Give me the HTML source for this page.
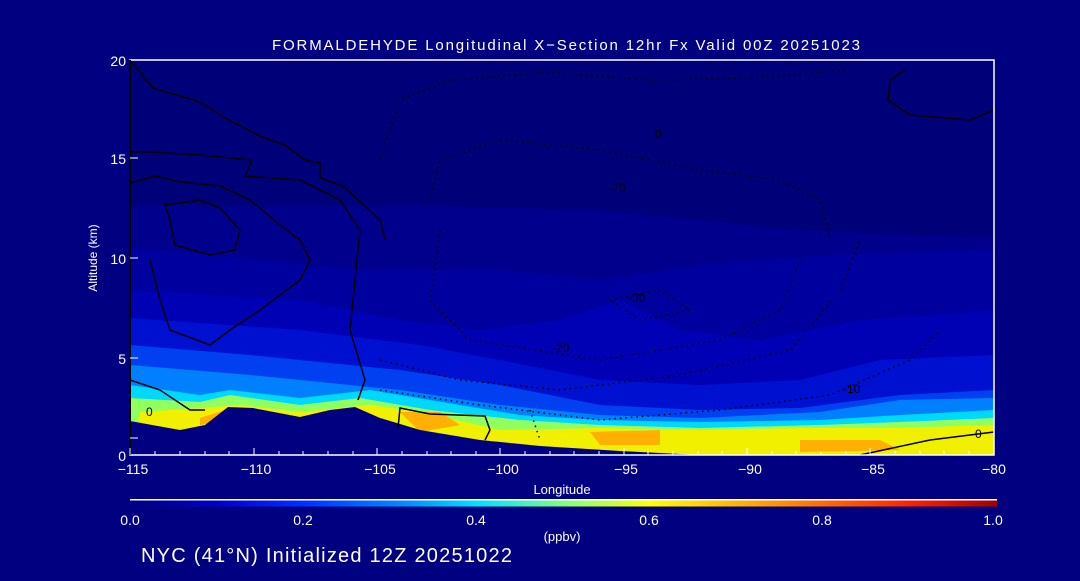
<!DOCTYPE html><html><head><style>
body{margin:0;background:#000080;width:1080px;height:576px;overflow:hidden;font-family:"Liberation Sans",sans-serif}
</style></head><body>
<svg width="1080" height="576" xmlns="http://www.w3.org/2000/svg" font-family="Liberation Sans, sans-serif" fill="#fff">
<defs>
<linearGradient id="cb" x1="0" x2="1">
<stop offset="0" stop-color="#000080"/><stop offset="0.1" stop-color="#0000c8"/><stop offset="0.2" stop-color="#0030ff"/><stop offset="0.32" stop-color="#0090ff"/><stop offset="0.4" stop-color="#00e0ff"/><stop offset="0.5" stop-color="#80ff80"/><stop offset="0.6" stop-color="#ffff00"/><stop offset="0.75" stop-color="#ff9000"/><stop offset="0.9" stop-color="#ff2000"/><stop offset="1" stop-color="#a00000"/>
</linearGradient>
<clipPath id="pc"><rect x="130" y="60" width="864" height="395"/></clipPath>
</defs>
<text x="272" y="50" font-size="15" textLength="588" lengthAdjust="spacing">FORMALDEHYDE Longitudinal X−Section 12hr  Fx Valid 00Z 20251023</text>
<g clip-path="url(#pc)">
<rect x="130" y="60" width="864" height="395" fill="#000078"/>
<path d="M130 205 L400 205 L600 210 L800 230 L994 238 L994 455 L130 455Z" fill="#00008c"/>
<path d="M130 248 L250 258 L350 270 L500 270 L600 280 L700 265 L830 255 L994 250 L994 455 L130 455Z" fill="#00009e"/>
<path d="M130 290 L300 300 L400 320 L480 330 L560 320 L620 300 L680 330 L760 340 L860 320 L994 310 L994 455 L130 455Z" fill="#0000b4"/>
<path d="M130 318 L300 330 L420 345 L500 360 L600 380 L700 385 L800 380 L880 360 L994 355 L994 455 L130 455Z" fill="#0010d0"/>
<path d="M130 345 L250 355 L400 370 L500 385 L600 405 L700 410 L800 408 L900 395 L994 390 L994 455 L130 455Z" fill="#0040f0"/>
<path d="M130 365 L250 375 L400 390 L500 405 L600 415 L700 418 L820 412 L900 400 L994 398 L994 455 L130 455Z" fill="#0080ff"/>
<path d="M130 385 L200 395 L230 390 L300 398 L370 390 L430 400 L520 415 L600 420 L700 422 L820 420 L900 415 L994 410 L994 455 L130 455Z" fill="#00d8ff"/>
<path d="M130 398 L200 402 L230 395 L300 405 L360 398 L430 410 L520 420 L600 425 L700 428 L820 425 L900 422 L994 418 L994 455 L130 455Z" fill="#90ff60"/>
<path d="M140 412 L200 408 L240 405 L300 412 L370 405 L420 412 L500 430 L600 428 L700 430 L800 428 L900 428 L994 425 L994 455 L130 455Z" fill="#f0f000"/>
<path d="M200 418 L225 410 L250 415 L200 425Z M400 412 L440 412 L460 425 L420 432Z M590 432 L660 430 L660 445 L600 445Z M800 440 L880 440 L900 450 L800 452Z" fill="#ffb000"/>
<path d="M130 421 L180 430 L205 425 L228 407 L253 408 L300 417 L330 410 L355 407 L380 418 L420 430 L480 440 L540 446 L620 451 L700 455 L994 455 L994 455 L130 455Z" fill="#000080"/>
<g fill="none" stroke="#000" stroke-width="1.5">
<path d="M130 60 L153 88 L200 102 L225 118 L260 136 L285 145 L305 160 L320 163 L320 178 L343 186 L380 220 L385 240"/>
<path d="M130 152 L150 152 L200 155 L252 160 L245 176 L300 180 L340 200 L360 230 L350 330 L365 380 L358 400"/>
<path d="M130 183 L155 176 L180 182 L220 186 L250 200 L280 225 L300 240 L310 260 L300 280 L260 310 L230 330 L210 345 L170 330 L160 300 L150 260"/>
<path d="M165 205 L200 200 L220 208 L240 230 L235 250 L210 255 L175 245 L170 220 Z"/>
<path d="M130 380 L160 390 L190 410 L205 410"/>
<path d="M398 428 L400 408 L430 414 L485 416 L490 430 L485 440"/>
<path d="M860 455 L930 440 L994 432"/>
<path d="M905 70 L890 80 L888 100 L910 115 L970 120 L994 110"/>
</g>
<g fill="none" stroke="#000" stroke-width="1.5" stroke-dasharray="1.5 4">
<path d="M380 160 L400 100 L450 80 L550 72 L650 80 L750 78 L850 70"/>
<path d="M430 200 L440 160 L500 140 L600 150 L700 170 L780 180 L820 200 L830 240"/>
<path d="M440 230 L430 300 L470 340 L600 360 L720 340 L780 310 L800 260"/>
<path d="M380 360 L460 380 L560 390 L680 375 L790 350 L840 290 L860 240"/>
<path d="M380 390 L480 405 L600 420 L720 410 L830 395 L910 360 L940 330"/>
<path d="M530 410 L540 440 M610 300 L660 290 L690 310 L640 320 Z"/>
</g>
</g>
<g font-size="12" fill="#000"><text x="655" y="138">0</text><text x="608" y="192">-20</text><text x="628" y="302">-30</text><text x="552" y="352">-20</text><text x="843" y="393">-10</text><text x="975" y="438">0</text><text x="146" y="416">0</text></g>
<g stroke="#fff" stroke-width="1.5" fill="none">
<path d="M130 60 L994 60 L994 455 L130 455 Z"/>
<path d="M130 60 L130 455" stroke="#000" stroke-width="2"/>
</g>
<g stroke="#fff" stroke-width="1">
<path d="M130 455v-7M155 455v-4M180 455v-4M205 455v-4M229 455v-4M254 455v-7M279 455v-4M303 455v-4M328 455v-4M353 455v-4M377 455v-7M402 455v-4M427 455v-4M451 455v-4M476 455v-4M500 455v-7M525 455v-4M550 455v-4M574 455v-4M599 455v-4M624 455v-7M648 455v-4M673 455v-4M698 455v-4M722 455v-4M747 455v-7M772 455v-4M796 455v-4M821 455v-4M846 455v-4M870 455v-7M895 455v-4M920 455v-4M944 455v-4M969 455v-4"/>
<path d="M130 438h8M130 358h8M130 258h8M130 158h8"/>
</g>
<g font-size="14" text-anchor="middle">
<text x="133" y="474">−115</text><text x="256" y="474">−110</text><text x="380" y="474">−105</text><text x="503" y="474">−100</text><text x="626" y="474">−95</text><text x="750" y="474">−90</text><text x="873" y="474">−85</text><text x="994" y="474">−80</text>
<text x="562" y="494" font-size="13">Longitude</text>
</g>
<g font-size="14" text-anchor="end">
<text x="126" y="461">0</text><text x="126" y="364">5</text><text x="126" y="264">10</text><text x="126" y="164">15</text><text x="126" y="66">20</text>
</g>
<text transform="translate(97 258) rotate(-90)" font-size="12" text-anchor="middle">Altitude (km)</text>
<rect x="130" y="499" width="867" height="1.5" fill="#fff"/>
<rect x="130" y="500.5" width="867" height="6" fill="url(#cb)"/>
<g font-size="14" text-anchor="middle">
<text x="130" y="525">0.0</text><text x="303" y="525">0.2</text><text x="476" y="525">0.4</text><text x="649" y="525">0.6</text><text x="822" y="525">0.8</text><text x="993" y="525">1.0</text>
<text x="562" y="541" font-size="13">(ppbv)</text>
</g>
<text x="141" y="562" font-size="20" textLength="371" lengthAdjust="spacing">NYC (41°N) Initialized 12Z 20251022</text>
</svg>
</body></html>
